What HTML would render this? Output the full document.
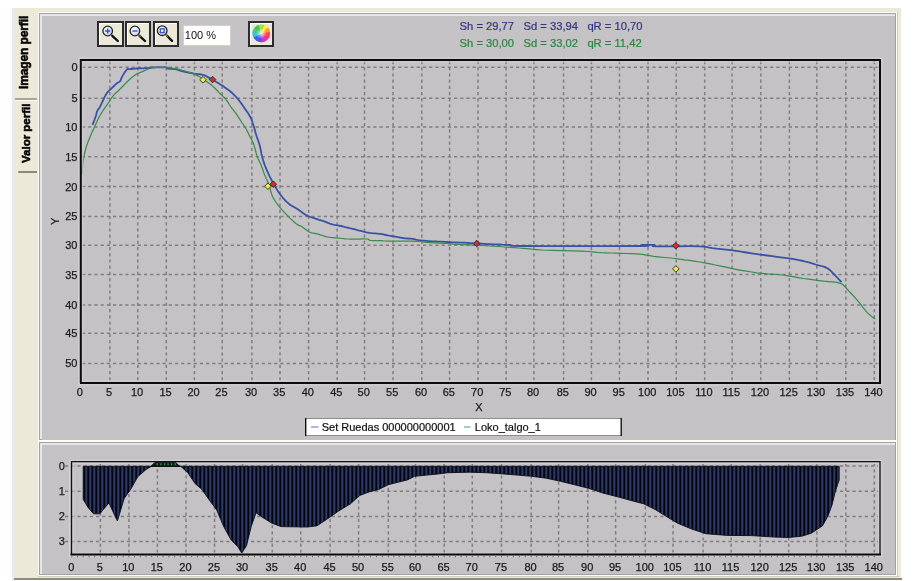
<!DOCTYPE html>
<html><head><meta charset="utf-8">
<style>
html,body{margin:0;padding:0;background:#fff;width:920px;height:581px;overflow:hidden;}
*{box-sizing:border-box;}
body{position:relative;font-family:"Liberation Sans", sans-serif;}
.a{position:absolute;will-change:transform;}
</style></head><body>
<div class="a" style="left:11.5px;top:8px;width:2px;height:573px;background:#e4eaf2"></div>
<div class="a" style="left:13.5px;top:8px;width:887px;height:572px;background:#ece9d8;"></div>
<div class="a" style="left:13.5px;top:578px;width:887.5px;height:1.7px;background:#8e8c7c"></div>
<!-- tabs -->
<div class="a" style="left:15.4px;top:97.5px;width:21.5px;height:2.3px;background:#a8a696"></div>
<div class="a" style="left:15.4px;top:100px;width:21.5px;height:1px;background:#fbfaf2"></div>
<div class="a" style="left:17.9px;top:170.6px;width:18.6px;height:2.4px;background:#8a887a;border-radius:1px 0 0 1px"></div>
<div class="a" style="left:18.3px;top:88.6px;width:0;height:0;">
  <div style="position:absolute;left:0;top:0;transform-origin:0 0;transform:rotate(-90deg);white-space:nowrap;font-weight:bold;font-size:12px;letter-spacing:-0.12px;line-height:13px;color:#000;-webkit-text-stroke:0.5px #000;">Imagen perfil</div>
</div>
<div class="a" style="left:20px;top:163px;width:0;height:0;">
  <div style="position:absolute;left:0;top:0;transform-origin:0 0;transform:rotate(-90deg);white-space:nowrap;font-weight:bold;font-size:11.5px;line-height:13px;color:#000;-webkit-text-stroke:0.5px #000;">Valor perfil</div>
</div>
<!-- main frame -->
<div class="a" style="left:37.5px;top:11.5px;width:860px;height:430.5px;background:#fdfdf8"></div>
<div class="a" style="left:39px;top:13px;width:856.5px;height:427px;border:1px solid #a2a2a2;background:#e6e6e6"></div>
<div class="a" style="left:41.5px;top:15.5px;width:853px;height:423.5px;background:#c4c2c5"></div>
<!-- bottom frame -->
<div class="a" style="left:37.5px;top:440.5px;width:860px;height:135.5px;background:#fdfdf8"></div>
<div class="a" style="left:39px;top:442px;width:856.5px;height:132.5px;border:1px solid #a2a2a2;background:#e6e6e6"></div>
<div class="a" style="left:41.5px;top:444.5px;width:853px;height:129px;background:#c4c2c5"></div>
<div class="a" style="left:897px;top:11.5px;width:1px;height:565px;background:#cfcdc0"></div>
<div class="a" style="left:37.5px;top:576px;width:860.5px;height:1px;background:#cfcdc0"></div>
<!-- toolbar buttons -->
<div class="a" style="left:97.3px;top:21.2px;width:26.6px;height:26.4px;border:2px solid #2c2c2c;background:#ece9d8;box-shadow:inset 1px 1px 0 #fff;"></div>
<div class="a" style="left:125px;top:21.2px;width:25.6px;height:26.4px;border:2px solid #2c2c2c;background:#ece9d8;box-shadow:inset 1px 1px 0 #fff;"></div>
<div class="a" style="left:152.9px;top:21.3px;width:25.6px;height:26.2px;border:2px solid #2c2c2c;background:#ece9d8;box-shadow:inset 1px 1px 0 #fff;"></div>
<div class="a" style="left:182.6px;top:25.2px;width:47.8px;height:20.8px;border:1px solid #d4d2c8;background:#fff;font-size:11px;line-height:19px;padding-left:0.8px;color:#111;">100 %</div>
<div class="a" style="left:248px;top:21.3px;width:26.2px;height:26.2px;border:2px solid #2c2c2c;background:#ece9d8;box-shadow:inset 1px 1px 0 #fff;"></div>
<svg class="a" style="left:0;top:0" width="920" height="581" viewBox="0 0 920 581" font-family='"Liberation Sans", sans-serif'>
<defs>
<filter id="bl" x="-20%" y="-20%" width="140%" height="140%"><feGaussianBlur stdDeviation="0.55"/></filter>
<radialGradient id="lens" cx="40%" cy="35%" r="65%"><stop offset="0" stop-color="#ffffff"/><stop offset="1" stop-color="#c8d0ee"/></radialGradient>
<radialGradient id="wh" cx="50%" cy="50%" r="50%"><stop offset="0" stop-color="#fff"/><stop offset="0.15" stop-color="#fff" stop-opacity="0.6"/><stop offset="0.6" stop-color="#fff" stop-opacity="0"/></radialGradient>
</defs>
<g>
 <circle cx="107.7" cy="31" r="4.8" fill="url(#lens)" stroke="#262626" stroke-width="1.3"/>
 <line x1="112.3" y1="35.8" x2="117.8" y2="41" stroke="#111" stroke-width="2.4" stroke-linecap="round"/>
 <path d="M105.1,31 H110.3 M107.7,28.4 V33.6" stroke="#3454c4" stroke-width="1.4"/>
</g>
<g>
 <circle cx="134.9" cy="31" r="4.8" fill="url(#lens)" stroke="#262626" stroke-width="1.3"/>
 <line x1="139.5" y1="35.8" x2="145" y2="41" stroke="#111" stroke-width="2.4" stroke-linecap="round"/>
 <line x1="138.9" y1="35.3" x2="140.6" y2="37" stroke="#c8d040" stroke-width="0.9"/>
 <path d="M132.3,31 H137.5" stroke="#3454c4" stroke-width="1.4"/>
</g>
<g>
 <circle cx="162.2" cy="30.7" r="4.8" fill="url(#lens)" stroke="#262626" stroke-width="1.3"/>
 <line x1="166.8" y1="35.5" x2="172" y2="40.8" stroke="#111" stroke-width="2.4" stroke-linecap="round"/>
 <line x1="166.2" y1="35" x2="167.9" y2="36.7" stroke="#c8d040" stroke-width="0.9"/>
 <rect x="160.3" y="28.8" width="3.8" height="3.8" fill="none" stroke="#3454c4" stroke-width="1.3"/>
</g>
<g filter="url(#bl)"><path d="M261.3,33.4 L263.50,24.78 A8.9,8.9 0 0 1 268.39,28.02 Z" fill="#f8f040"/><path d="M261.3,33.4 L267.81,27.34 A8.9,8.9 0 0 1 270.17,32.70 Z" fill="#ffa028"/><path d="M261.3,33.4 L270.06,31.82 A8.9,8.9 0 0 1 269.14,37.61 Z" fill="#ff4848"/><path d="M261.3,33.4 L269.52,36.81 A8.9,8.9 0 0 1 265.62,41.18 Z" fill="#ff2898"/><path d="M261.3,33.4 L266.38,40.71 A8.9,8.9 0 0 1 260.73,42.28 Z" fill="#c040c0"/><path d="M261.3,33.4 L261.62,42.29 A8.9,8.9 0 0 1 256.02,40.56 Z" fill="#6848d8"/><path d="M261.3,33.4 L256.76,41.05 A8.9,8.9 0 0 1 252.98,36.57 Z" fill="#4068e0"/><path d="M261.3,33.4 L253.34,37.38 A8.9,8.9 0 0 1 252.59,31.57 Z" fill="#38c0e8"/><path d="M261.3,33.4 L252.45,32.45 A8.9,8.9 0 0 1 254.96,27.15 Z" fill="#38d088"/><path d="M261.3,33.4 L254.37,27.81 A8.9,8.9 0 0 1 259.35,24.72 Z" fill="#48c048"/><path d="M261.3,33.4 L258.49,24.96 A8.9,8.9 0 0 1 264.35,25.04 Z" fill="#a8e040"/><circle cx="261.3" cy="33.4" r="8.9" fill="url(#wh)"/></g>
<line x1="109.9" y1="61" x2="109.9" y2="382" stroke="#807e82" stroke-width="1.5" stroke-dasharray="3.2,3"/>
<line x1="137.8" y1="61" x2="137.8" y2="382" stroke="#807e82" stroke-width="1.5" stroke-dasharray="3.2,3"/>
<line x1="166.3" y1="61" x2="166.3" y2="382" stroke="#807e82" stroke-width="1.5" stroke-dasharray="3.2,3"/>
<line x1="194.4" y1="61" x2="194.4" y2="382" stroke="#807e82" stroke-width="1.5" stroke-dasharray="3.2,3"/>
<line x1="222.2" y1="61" x2="222.2" y2="382" stroke="#807e82" stroke-width="1.5" stroke-dasharray="3.2,3"/>
<line x1="251.9" y1="61" x2="251.9" y2="382" stroke="#807e82" stroke-width="1.5" stroke-dasharray="3.2,3"/>
<line x1="280.0" y1="61" x2="280.0" y2="382" stroke="#807e82" stroke-width="1.5" stroke-dasharray="3.2,3"/>
<line x1="308.6" y1="61" x2="308.6" y2="382" stroke="#807e82" stroke-width="1.5" stroke-dasharray="3.2,3"/>
<line x1="337.1" y1="61" x2="337.1" y2="382" stroke="#807e82" stroke-width="1.5" stroke-dasharray="3.2,3"/>
<line x1="364.5" y1="61" x2="364.5" y2="382" stroke="#807e82" stroke-width="1.5" stroke-dasharray="3.2,3"/>
<line x1="393.0" y1="61" x2="393.0" y2="382" stroke="#807e82" stroke-width="1.5" stroke-dasharray="3.2,3"/>
<line x1="421.8" y1="61" x2="421.8" y2="382" stroke="#807e82" stroke-width="1.5" stroke-dasharray="3.2,3"/>
<line x1="449.6" y1="61" x2="449.6" y2="382" stroke="#807e82" stroke-width="1.5" stroke-dasharray="3.2,3"/>
<line x1="478.0" y1="61" x2="478.0" y2="382" stroke="#807e82" stroke-width="1.5" stroke-dasharray="3.2,3"/>
<line x1="506.1" y1="61" x2="506.1" y2="382" stroke="#807e82" stroke-width="1.5" stroke-dasharray="3.2,3"/>
<line x1="533.9" y1="61" x2="533.9" y2="382" stroke="#807e82" stroke-width="1.5" stroke-dasharray="3.2,3"/>
<line x1="563.6" y1="61" x2="563.6" y2="382" stroke="#807e82" stroke-width="1.5" stroke-dasharray="3.2,3"/>
<line x1="591.4" y1="61" x2="591.4" y2="382" stroke="#807e82" stroke-width="1.5" stroke-dasharray="3.2,3"/>
<line x1="619.5" y1="61" x2="619.5" y2="382" stroke="#807e82" stroke-width="1.5" stroke-dasharray="3.2,3"/>
<line x1="648.0" y1="61" x2="648.0" y2="382" stroke="#807e82" stroke-width="1.5" stroke-dasharray="3.2,3"/>
<line x1="676.2" y1="61" x2="676.2" y2="382" stroke="#807e82" stroke-width="1.5" stroke-dasharray="3.2,3"/>
<line x1="704.7" y1="61" x2="704.7" y2="382" stroke="#807e82" stroke-width="1.5" stroke-dasharray="3.2,3"/>
<line x1="732.1" y1="61" x2="732.1" y2="382" stroke="#807e82" stroke-width="1.5" stroke-dasharray="3.2,3"/>
<line x1="760.8" y1="61" x2="760.8" y2="382" stroke="#807e82" stroke-width="1.5" stroke-dasharray="3.2,3"/>
<line x1="789.4" y1="61" x2="789.4" y2="382" stroke="#807e82" stroke-width="1.5" stroke-dasharray="3.2,3"/>
<line x1="816.8" y1="61" x2="816.8" y2="382" stroke="#807e82" stroke-width="1.5" stroke-dasharray="3.2,3"/>
<line x1="845.8" y1="61" x2="845.8" y2="382" stroke="#807e82" stroke-width="1.5" stroke-dasharray="3.2,3"/>
<line x1="874.3" y1="61" x2="874.3" y2="382" stroke="#807e82" stroke-width="1.5" stroke-dasharray="3.2,3"/>
<line x1="82" y1="67.3" x2="879" y2="67.3" stroke="#807e82" stroke-width="1.5" stroke-dasharray="3.2,3"/>
<line x1="82" y1="98.2" x2="879" y2="98.2" stroke="#807e82" stroke-width="1.5" stroke-dasharray="3.2,3"/>
<line x1="82" y1="126.9" x2="879" y2="126.9" stroke="#807e82" stroke-width="1.5" stroke-dasharray="3.2,3"/>
<line x1="82" y1="156.7" x2="879" y2="156.7" stroke="#807e82" stroke-width="1.5" stroke-dasharray="3.2,3"/>
<line x1="82" y1="186.5" x2="879" y2="186.5" stroke="#807e82" stroke-width="1.5" stroke-dasharray="3.2,3"/>
<line x1="82" y1="216.4" x2="879" y2="216.4" stroke="#807e82" stroke-width="1.5" stroke-dasharray="3.2,3"/>
<line x1="82" y1="245.2" x2="879" y2="245.2" stroke="#807e82" stroke-width="1.5" stroke-dasharray="3.2,3"/>
<line x1="82" y1="274.5" x2="879" y2="274.5" stroke="#807e82" stroke-width="1.5" stroke-dasharray="3.2,3"/>
<line x1="82" y1="305.1" x2="879" y2="305.1" stroke="#807e82" stroke-width="1.5" stroke-dasharray="3.2,3"/>
<line x1="82" y1="333.2" x2="879" y2="333.2" stroke="#807e82" stroke-width="1.5" stroke-dasharray="3.2,3"/>
<line x1="82" y1="363.4" x2="879" y2="363.4" stroke="#807e82" stroke-width="1.5" stroke-dasharray="3.2,3"/>
<polyline points="92.5,124.9 93.0,123.6 93.7,121.8 94.5,119.8 95.2,117.9 95.8,116.1 96.3,114.3 96.7,112.5 97.3,111.0 97.9,109.8 98.6,108.9 99.3,108.0 100.0,106.9 100.7,105.5 101.4,103.9 102.2,102.2 103.0,100.5 103.9,98.7 104.8,96.7 105.8,94.8 106.9,93.1 108.2,91.6 109.6,90.2 111.0,88.9 112.3,87.7 113.5,86.5 114.6,85.4 115.6,84.4 116.6,83.5 117.6,82.8 118.6,82.3 119.4,81.8 120.2,81.1 120.7,80.2 121.0,79.3 121.4,78.2 122.0,76.9 123.0,75.1 124.3,73.0 125.6,71.0 126.8,69.6 127.6,69.0 128.3,69.0 129.0,69.2 130.0,69.2 131.3,69.0 132.8,68.8 134.6,68.7 136.5,68.5 138.8,68.4 141.5,68.4 144.1,68.3 146.3,68.2 147.8,68.0 148.7,67.8 149.8,67.6 151.7,67.4 154.9,67.3 159.0,67.3 163.0,67.3 165.9,67.4 167.1,67.7 167.4,68.0 167.4,68.4 168.0,68.7 169.6,68.9 171.6,68.9 173.8,69.0 175.7,69.2 177.0,69.5 178.1,69.9 179.3,70.4 181.1,70.9 183.9,71.5 187.3,72.3 190.9,73.0 194.1,73.6 196.7,74.0 199.1,74.2 201.4,74.5 203.9,75.2 206.7,76.4 209.7,78.1 212.6,79.8 215.0,81.2 216.9,82.3 218.3,83.1 219.6,83.9 221.0,84.8 222.5,85.8 224.0,86.8 225.5,87.9 227.0,89.0 228.5,90.1 230.1,91.3 231.6,92.5 233.1,93.9 234.6,95.4 236.1,97.0 237.6,98.7 239.1,100.5 240.6,102.5 242.1,104.6 243.6,106.8 245.1,108.9 246.5,111.0 248.0,113.1 249.3,115.2 250.5,117.3 251.5,119.4 252.2,121.5 252.9,123.7 253.6,125.8 254.2,127.8 254.8,129.8 255.3,131.9 256.0,134.2 256.8,136.8 257.8,139.5 258.8,142.3 259.6,145.1 260.3,147.8 260.8,150.5 261.3,153.2 261.9,155.8 262.6,158.3 263.3,160.8 264.1,163.2 264.9,165.5 265.8,167.7 266.7,169.9 267.6,171.9 268.5,173.9 269.4,175.8 270.3,177.7 271.2,179.4 272.1,181.1 272.8,182.5 273.5,183.7 274.2,185.0 275.1,186.6 276.4,188.6 277.8,190.9 279.4,193.3 281.1,195.6 282.9,197.8 284.7,199.9 286.7,201.9 288.7,203.7 290.8,205.2 293.0,206.5 295.2,207.8 297.4,209.1 299.6,210.6 301.8,212.2 303.9,213.8 306.1,215.1 308.3,216.1 310.5,217.0 312.6,217.7 314.8,218.4 317.0,219.1 319.1,219.8 321.3,220.4 323.5,221.1 325.7,221.9 327.9,222.8 330.0,223.6 332.2,224.3 334.4,224.8 336.5,225.2 338.7,225.6 340.9,226.0 343.1,226.5 345.2,227.1 347.4,227.6 349.6,228.2 351.7,228.7 353.8,229.2 356.0,229.7 358.3,230.3 360.9,230.9 363.6,231.6 366.3,232.3 369.1,232.8 371.9,233.2 374.8,233.4 377.5,233.6 380.0,233.9 382.2,234.2 384.1,234.6 385.9,235.0 387.6,235.3 389.3,235.6 390.8,235.8 392.3,236.1 394.1,236.4 396.1,236.8 398.2,237.2 400.5,237.6 402.8,238.0 405.2,238.3 407.8,238.5 410.4,238.7 412.6,238.9 414.4,239.2 415.9,239.6 417.3,239.9 419.1,240.2 421.2,240.5 423.4,240.7 425.9,240.9 428.9,241.1 432.7,241.3 437.1,241.5 441.5,241.6 445.2,241.8 447.9,242.0 449.9,242.1 451.7,242.3 453.9,242.4 456.5,242.5 459.3,242.6 462.1,242.6 464.8,242.7 467.1,242.8 469.2,243.0 471.5,243.1 474.6,243.3 478.9,243.5 483.9,243.8 489.2,244.1 494.0,244.3 498.3,244.5 502.4,244.7 506.3,244.8 510.0,245.0 511.0,245.3 510.2,245.5 512.5,245.8 523.0,246.0 547.7,246.1 582.4,246.1 616.8,246.1 640.4,246.0 648.6,245.8 647.5,245.5 643.1,245.2 641.5,245.0 644.2,244.9 648.0,244.9 651.9,244.9 654.6,245.0 654.7,245.3 653.3,245.7 652.7,246.0 655.7,246.3 664.3,246.3 676.6,246.3 689.3,246.2 699.0,246.3 704.3,246.6 707.2,247.1 709.4,247.7 712.4,248.2 716.6,248.7 721.2,249.1 726.1,249.6 731.0,250.2 736.0,250.9 741.2,251.7 746.4,252.5 751.6,253.3 756.9,254.1 762.2,254.8 767.4,255.5 772.3,256.2 776.8,256.8 780.9,257.3 784.9,257.8 788.8,258.3 792.6,258.9 796.3,259.6 799.9,260.3 803.3,261.0 806.6,261.8 809.8,262.7 812.8,263.6 815.7,264.5 818.5,265.3 821.2,266.0 823.8,266.7 826.0,267.6 827.8,268.5 829.2,269.5 830.5,270.7 832.2,272.3 834.5,274.6 837.2,277.5 839.8,280.3 841.5,282.2" fill="none" stroke="#3a52a4" stroke-width="1.8" stroke-linejoin="round"/>
<polyline points="82.1,174.4 82.2,172.4 82.4,169.4 82.6,166.2 82.8,163.4 83.1,161.1 83.4,159.1 83.8,157.1 84.2,155.1 84.7,153.0 85.2,150.8 85.8,148.7 86.3,146.8 86.8,145.3 87.3,144.0 87.7,142.7 88.3,141.3 88.9,139.7 89.6,138.0 90.3,136.2 91.1,134.4 91.9,132.6 92.7,130.8 93.6,128.9 94.5,126.9 95.5,124.7 96.6,122.4 97.6,120.0 98.7,117.9 99.7,116.0 100.7,114.3 101.7,112.7 102.8,111.0 104.0,109.2 105.2,107.4 106.5,105.6 107.8,103.8 109.1,101.9 110.3,99.8 111.6,97.9 112.9,96.1 114.2,94.6 115.6,93.3 117.0,92.0 118.4,90.7 119.7,89.4 121.1,88.0 122.4,86.7 123.8,85.3 125.2,83.8 126.7,82.3 128.2,80.8 129.8,79.3 131.4,77.9 133.1,76.5 134.7,75.2 136.5,74.1 138.4,73.1 140.4,72.3 142.4,71.6 144.1,70.9 145.5,70.3 146.6,69.7 147.7,69.2 149.0,68.7 150.6,68.3 152.2,67.9 154.1,67.6 156.1,67.4 158.4,67.3 160.8,67.2 163.4,67.3 165.9,67.4 168.4,67.6 170.9,67.9 173.3,68.3 175.7,68.7 177.9,69.2 180.1,69.7 182.2,70.3 184.3,70.9 186.5,71.5 188.8,72.2 191.0,72.9 193.0,73.6 194.8,74.3 196.4,75.1 198.0,75.9 199.6,76.8 201.2,77.8 202.9,78.9 204.5,80.0 206.1,81.2 207.7,82.3 209.2,83.4 210.8,84.6 212.6,86.1 214.7,88.0 216.9,90.3 219.1,92.6 221.0,94.5 222.5,95.9 223.6,97.0 224.7,98.0 225.8,99.3 227.0,100.9 228.2,102.7 229.4,104.6 230.7,106.5 232.0,108.3 233.4,110.1 234.8,111.9 236.1,113.7 237.3,115.5 238.5,117.4 239.7,119.2 240.9,121.0 242.1,122.8 243.3,124.5 244.5,126.3 245.7,128.2 246.8,130.2 247.9,132.4 248.9,134.5 249.9,136.6 250.9,138.4 251.8,140.0 252.7,141.8 253.6,143.9 254.4,146.6 255.3,149.7 256.1,152.9 257.0,155.8 258.0,158.4 259.2,160.9 260.3,163.2 261.3,165.5 262.1,167.7 262.8,169.8 263.5,171.8 264.3,173.9 265.2,176.0 266.1,178.2 267.1,180.3 267.9,182.3 268.6,184.2 269.2,186.0 269.7,187.8 270.3,189.6 270.8,191.4 271.3,193.1 271.9,194.9 272.7,196.8 273.8,198.8 275.0,200.9 276.5,203.0 278.1,205.2 280.0,207.5 282.0,209.8 284.2,212.2 286.5,214.6 289.0,217.1 291.6,219.6 294.1,222.0 296.3,223.8 297.9,224.9 299.1,225.4 300.3,225.8 301.7,226.5 303.4,227.8 305.3,229.3 307.3,230.8 309.3,232.0 311.4,232.8 313.6,233.2 315.8,233.6 318.0,234.1 320.2,234.8 322.4,235.5 324.5,236.2 326.7,236.8 328.7,237.2 330.7,237.5 332.8,237.7 335.4,237.9 338.5,238.2 342.0,238.5 345.7,238.8 349.6,239.0 354.1,239.0 359.0,239.0 363.6,238.9 367.0,239.0 368.6,239.3 369.1,239.7 369.3,240.1 370.2,240.4 372.2,240.5 374.8,240.5 377.5,240.5 380.0,240.5 381.8,240.6 383.1,240.8 385.1,241.0 388.7,241.1 395.1,241.2 403.4,241.2 411.6,241.2 418.0,241.3 421.4,241.5 423.0,241.8 424.3,242.1 426.7,242.4 430.8,242.6 435.8,242.9 440.9,243.1 445.2,243.3 448.3,243.5 450.7,243.8 453.0,244.1 456.1,244.3 459.9,244.5 464.1,244.6 469.0,244.8 474.6,245.1 481.6,245.5 489.7,246.0 497.8,246.5 504.8,247.0 510.2,247.4 514.6,247.7 518.6,248.0 523.0,248.3 527.3,248.7 531.5,249.2 536.3,249.6 542.6,250.0 551.5,250.3 562.2,250.6 572.8,250.8 581.7,251.1 588.0,251.5 592.7,251.9 596.9,252.3 601.3,252.6 606.2,252.8 611.1,253.0 616.0,253.1 620.9,253.3 625.9,253.5 631.1,253.6 636.0,253.8 640.4,254.1 643.9,254.6 646.8,255.1 649.8,255.7 653.5,256.3 658.6,256.9 664.6,257.5 670.5,258.0 675.2,258.5 678.1,258.9 680.0,259.2 681.6,259.4 684.0,259.8 687.4,260.2 691.3,260.7 695.5,261.3 700.0,262.0 704.8,262.9 710.1,263.9 715.4,265.0 720.7,266.1 725.9,267.2 731.0,268.3 736.1,269.3 741.3,270.3 746.5,271.2 751.6,272.0 756.8,272.8 762.0,273.4 767.2,273.9 772.3,274.2 777.4,274.5 782.6,275.0 787.8,275.8 793.0,276.7 798.1,277.6 803.3,278.5 808.6,279.2 813.9,279.9 819.0,280.6 823.9,281.2 828.5,281.6 832.9,281.9 836.9,282.4 840.4,283.3 843.0,284.7 844.9,286.5 846.7,288.6 848.7,290.9 851.2,293.5 853.9,296.4 856.5,299.4 859.0,302.3 861.2,305.0 863.3,307.8 865.3,310.3 867.3,312.6 869.4,314.6 871.6,316.4 873.6,317.9 874.9,319.0" fill="none" stroke="#3a8c4c" stroke-width="1.25" stroke-linejoin="round"/>
<polygon points="203.0,76.5 206.3,79.8 203.0,83.1 199.7,79.8" fill="#f2ea3a" stroke="#2a2a2a" stroke-width="0.9" stroke-linejoin="round"/>
<polygon points="212.6,76.3 215.9,79.6 212.6,82.9 209.3,79.6" fill="#d92a2a" stroke="#2a2a2a" stroke-width="0.9" stroke-linejoin="round"/>
<polygon points="267.9,182.9 271.2,186.2 267.9,189.5 264.6,186.2" fill="#f2ea3a" stroke="#2a2a2a" stroke-width="0.9" stroke-linejoin="round"/>
<polygon points="273.3,180.9 276.6,184.2 273.3,187.5 270.0,184.2" fill="#d92a2a" stroke="#2a2a2a" stroke-width="0.9" stroke-linejoin="round"/>
<polygon points="476.7,240.2 480.0,243.5 476.7,246.8 473.4,243.5" fill="#d92a2a" stroke="#2a2a2a" stroke-width="0.9" stroke-linejoin="round"/>
<polygon points="675.8,242.4 679.1,245.7 675.8,249.0 672.5,245.7" fill="#d92a2a" stroke="#2a2a2a" stroke-width="0.9" stroke-linejoin="round"/>
<polygon points="675.9,265.6 679.2,268.9 675.9,272.2 672.6,268.9" fill="#f2ea3a" stroke="#2a2a2a" stroke-width="0.9" stroke-linejoin="round"/>
<rect x="78.8" y="58" width="803.2" height="327" fill="none" stroke="#d4d2d5" stroke-width="1"/>
<rect x="82.8" y="62" width="795.2" height="319" fill="none" stroke="#d0ced1" stroke-width="1"/>
<path d="M80.8,382.5 V60 H880 V382.5" fill="none" stroke="#0c0c0c" stroke-width="2"/>
<path d="M80,383 H881" fill="none" stroke="#0c0c0c" stroke-width="2"/>
<text x="77.5" y="71.3" text-anchor="end" font-size="11" fill="#1a1a1a" stroke="#1a1a1a" stroke-width="0.25">0</text>
<text x="77.5" y="102.2" text-anchor="end" font-size="11" fill="#1a1a1a" stroke="#1a1a1a" stroke-width="0.25">5</text>
<text x="77.5" y="130.9" text-anchor="end" font-size="11" fill="#1a1a1a" stroke="#1a1a1a" stroke-width="0.25">10</text>
<text x="77.5" y="160.7" text-anchor="end" font-size="11" fill="#1a1a1a" stroke="#1a1a1a" stroke-width="0.25">15</text>
<text x="77.5" y="190.5" text-anchor="end" font-size="11" fill="#1a1a1a" stroke="#1a1a1a" stroke-width="0.25">20</text>
<text x="77.5" y="220.4" text-anchor="end" font-size="11" fill="#1a1a1a" stroke="#1a1a1a" stroke-width="0.25">25</text>
<text x="77.5" y="249.2" text-anchor="end" font-size="11" fill="#1a1a1a" stroke="#1a1a1a" stroke-width="0.25">30</text>
<text x="77.5" y="278.5" text-anchor="end" font-size="11" fill="#1a1a1a" stroke="#1a1a1a" stroke-width="0.25">35</text>
<text x="77.5" y="309.1" text-anchor="end" font-size="11" fill="#1a1a1a" stroke="#1a1a1a" stroke-width="0.25">40</text>
<text x="77.5" y="337.2" text-anchor="end" font-size="11" fill="#1a1a1a" stroke="#1a1a1a" stroke-width="0.25">45</text>
<text x="77.5" y="367.4" text-anchor="end" font-size="11" fill="#1a1a1a" stroke="#1a1a1a" stroke-width="0.25">50</text>
<text x="79.9" y="396.1" text-anchor="middle" font-size="11" fill="#1a1a1a" stroke="#1a1a1a" stroke-width="0.25">0</text>
<text x="109.1" y="396.1" text-anchor="middle" font-size="11" fill="#1a1a1a" stroke="#1a1a1a" stroke-width="0.25">5</text>
<text x="137.0" y="396.1" text-anchor="middle" font-size="11" fill="#1a1a1a" stroke="#1a1a1a" stroke-width="0.25">10</text>
<text x="165.5" y="396.1" text-anchor="middle" font-size="11" fill="#1a1a1a" stroke="#1a1a1a" stroke-width="0.25">15</text>
<text x="193.6" y="396.1" text-anchor="middle" font-size="11" fill="#1a1a1a" stroke="#1a1a1a" stroke-width="0.25">20</text>
<text x="221.4" y="396.1" text-anchor="middle" font-size="11" fill="#1a1a1a" stroke="#1a1a1a" stroke-width="0.25">25</text>
<text x="251.1" y="396.1" text-anchor="middle" font-size="11" fill="#1a1a1a" stroke="#1a1a1a" stroke-width="0.25">30</text>
<text x="279.2" y="396.1" text-anchor="middle" font-size="11" fill="#1a1a1a" stroke="#1a1a1a" stroke-width="0.25">35</text>
<text x="307.8" y="396.1" text-anchor="middle" font-size="11" fill="#1a1a1a" stroke="#1a1a1a" stroke-width="0.25">40</text>
<text x="336.3" y="396.1" text-anchor="middle" font-size="11" fill="#1a1a1a" stroke="#1a1a1a" stroke-width="0.25">45</text>
<text x="363.7" y="396.1" text-anchor="middle" font-size="11" fill="#1a1a1a" stroke="#1a1a1a" stroke-width="0.25">50</text>
<text x="392.2" y="396.1" text-anchor="middle" font-size="11" fill="#1a1a1a" stroke="#1a1a1a" stroke-width="0.25">55</text>
<text x="421.0" y="396.1" text-anchor="middle" font-size="11" fill="#1a1a1a" stroke="#1a1a1a" stroke-width="0.25">60</text>
<text x="448.8" y="396.1" text-anchor="middle" font-size="11" fill="#1a1a1a" stroke="#1a1a1a" stroke-width="0.25">65</text>
<text x="477.2" y="396.1" text-anchor="middle" font-size="11" fill="#1a1a1a" stroke="#1a1a1a" stroke-width="0.25">70</text>
<text x="505.3" y="396.1" text-anchor="middle" font-size="11" fill="#1a1a1a" stroke="#1a1a1a" stroke-width="0.25">75</text>
<text x="533.1" y="396.1" text-anchor="middle" font-size="11" fill="#1a1a1a" stroke="#1a1a1a" stroke-width="0.25">80</text>
<text x="562.8" y="396.1" text-anchor="middle" font-size="11" fill="#1a1a1a" stroke="#1a1a1a" stroke-width="0.25">85</text>
<text x="590.6" y="396.1" text-anchor="middle" font-size="11" fill="#1a1a1a" stroke="#1a1a1a" stroke-width="0.25">90</text>
<text x="618.7" y="396.1" text-anchor="middle" font-size="11" fill="#1a1a1a" stroke="#1a1a1a" stroke-width="0.25">95</text>
<text x="647.2" y="396.1" text-anchor="middle" font-size="11" fill="#1a1a1a" stroke="#1a1a1a" stroke-width="0.25">100</text>
<text x="675.4" y="396.1" text-anchor="middle" font-size="11" fill="#1a1a1a" stroke="#1a1a1a" stroke-width="0.25">105</text>
<text x="703.9" y="396.1" text-anchor="middle" font-size="11" fill="#1a1a1a" stroke="#1a1a1a" stroke-width="0.25">110</text>
<text x="731.3" y="396.1" text-anchor="middle" font-size="11" fill="#1a1a1a" stroke="#1a1a1a" stroke-width="0.25">115</text>
<text x="760.0" y="396.1" text-anchor="middle" font-size="11" fill="#1a1a1a" stroke="#1a1a1a" stroke-width="0.25">120</text>
<text x="788.6" y="396.1" text-anchor="middle" font-size="11" fill="#1a1a1a" stroke="#1a1a1a" stroke-width="0.25">125</text>
<text x="816.0" y="396.1" text-anchor="middle" font-size="11" fill="#1a1a1a" stroke="#1a1a1a" stroke-width="0.25">130</text>
<text x="845.0" y="396.1" text-anchor="middle" font-size="11" fill="#1a1a1a" stroke="#1a1a1a" stroke-width="0.25">135</text>
<text x="873.5" y="396.1" text-anchor="middle" font-size="11" fill="#1a1a1a" stroke="#1a1a1a" stroke-width="0.25">140</text>
<text x="479" y="411.2" text-anchor="middle" font-size="11" fill="#1a1a1a" stroke="#1a1a1a" stroke-width="0.25">X</text>
<text transform="translate(59,221.3) rotate(-90)" text-anchor="middle" font-size="11" fill="#1a1a1a" stroke="#1a1a1a" stroke-width="0.25">Y</text>
<rect x="305" y="418" width="317" height="18" fill="#fff"/>
<line x1="305" y1="418.5" x2="622" y2="418.5" stroke="#8c8c8c" stroke-width="1"/>
<line x1="305" y1="435.5" x2="622" y2="435.5" stroke="#8c8c8c" stroke-width="1"/>
<line x1="305.7" y1="418" x2="305.7" y2="436" stroke="#111" stroke-width="1.4"/>
<line x1="621.2" y1="418" x2="621.2" y2="436" stroke="#111" stroke-width="1.4"/>
<line x1="311" y1="427" x2="318.5" y2="427" stroke="#8c8cd0" stroke-width="1.3"/>
<text x="321.7" y="431" font-size="11" fill="#111" stroke="#111" stroke-width="0.2">Set Ruedas 000000000001</text>
<line x1="464" y1="427" x2="470.5" y2="427" stroke="#70b880" stroke-width="1.3"/>
<text x="474.8" y="431" font-size="11" fill="#111" stroke="#111" stroke-width="0.2">Loko_talgo_1</text>
<line x1="100.4" y1="463" x2="100.4" y2="553" stroke="#807e82" stroke-width="1.5" stroke-dasharray="3.2,3"/>
<line x1="128.9" y1="463" x2="128.9" y2="553" stroke="#807e82" stroke-width="1.5" stroke-dasharray="3.2,3"/>
<line x1="157.4" y1="463" x2="157.4" y2="553" stroke="#807e82" stroke-width="1.5" stroke-dasharray="3.2,3"/>
<line x1="186.0" y1="463" x2="186.0" y2="553" stroke="#807e82" stroke-width="1.5" stroke-dasharray="3.2,3"/>
<line x1="214.5" y1="463" x2="214.5" y2="553" stroke="#807e82" stroke-width="1.5" stroke-dasharray="3.2,3"/>
<line x1="242.6" y1="463" x2="242.6" y2="553" stroke="#807e82" stroke-width="1.5" stroke-dasharray="3.2,3"/>
<line x1="272.3" y1="463" x2="272.3" y2="553" stroke="#807e82" stroke-width="1.5" stroke-dasharray="3.2,3"/>
<line x1="300.8" y1="463" x2="300.8" y2="553" stroke="#807e82" stroke-width="1.5" stroke-dasharray="3.2,3"/>
<line x1="330.1" y1="463" x2="330.1" y2="553" stroke="#807e82" stroke-width="1.5" stroke-dasharray="3.2,3"/>
<line x1="358.6" y1="463" x2="358.6" y2="553" stroke="#807e82" stroke-width="1.5" stroke-dasharray="3.2,3"/>
<line x1="388.3" y1="463" x2="388.3" y2="553" stroke="#807e82" stroke-width="1.5" stroke-dasharray="3.2,3"/>
<line x1="415.6" y1="463" x2="415.6" y2="553" stroke="#807e82" stroke-width="1.5" stroke-dasharray="3.2,3"/>
<line x1="444.2" y1="463" x2="444.2" y2="553" stroke="#807e82" stroke-width="1.5" stroke-dasharray="3.2,3"/>
<line x1="472.3" y1="463" x2="472.3" y2="553" stroke="#807e82" stroke-width="1.5" stroke-dasharray="3.2,3"/>
<line x1="501.5" y1="463" x2="501.5" y2="553" stroke="#807e82" stroke-width="1.5" stroke-dasharray="3.2,3"/>
<line x1="531.2" y1="463" x2="531.2" y2="553" stroke="#807e82" stroke-width="1.5" stroke-dasharray="3.2,3"/>
<line x1="558.6" y1="463" x2="558.6" y2="553" stroke="#807e82" stroke-width="1.5" stroke-dasharray="3.2,3"/>
<line x1="587.8" y1="463" x2="587.8" y2="553" stroke="#807e82" stroke-width="1.5" stroke-dasharray="3.2,3"/>
<line x1="615.6" y1="463" x2="615.6" y2="553" stroke="#807e82" stroke-width="1.5" stroke-dasharray="3.2,3"/>
<line x1="645.3" y1="463" x2="645.3" y2="553" stroke="#807e82" stroke-width="1.5" stroke-dasharray="3.2,3"/>
<line x1="673.0" y1="463" x2="673.0" y2="553" stroke="#807e82" stroke-width="1.5" stroke-dasharray="3.2,3"/>
<line x1="703.1" y1="463" x2="703.1" y2="553" stroke="#807e82" stroke-width="1.5" stroke-dasharray="3.2,3"/>
<line x1="731.2" y1="463" x2="731.2" y2="553" stroke="#807e82" stroke-width="1.5" stroke-dasharray="3.2,3"/>
<line x1="760.2" y1="463" x2="760.2" y2="553" stroke="#807e82" stroke-width="1.5" stroke-dasharray="3.2,3"/>
<line x1="788.7" y1="463" x2="788.7" y2="553" stroke="#807e82" stroke-width="1.5" stroke-dasharray="3.2,3"/>
<line x1="816.8" y1="463" x2="816.8" y2="553" stroke="#807e82" stroke-width="1.5" stroke-dasharray="3.2,3"/>
<line x1="845.8" y1="463" x2="845.8" y2="553" stroke="#807e82" stroke-width="1.5" stroke-dasharray="3.2,3"/>
<line x1="874.3" y1="463" x2="874.3" y2="553" stroke="#807e82" stroke-width="1.5" stroke-dasharray="3.2,3"/>
<line x1="65" y1="466.0" x2="879" y2="466.0" stroke="#807e82" stroke-width="1.5" stroke-dasharray="3.2,3"/>
<line x1="65" y1="491.2" x2="879" y2="491.2" stroke="#807e82" stroke-width="1.5" stroke-dasharray="3.2,3"/>
<line x1="65" y1="516.4" x2="879" y2="516.4" stroke="#807e82" stroke-width="1.5" stroke-dasharray="3.2,3"/>
<line x1="65" y1="541.4" x2="879" y2="541.4" stroke="#807e82" stroke-width="1.5" stroke-dasharray="3.2,3"/>
<rect x="73.2" y="463.5" width="805.3" height="89.5" fill="none" stroke="#d0ced1" stroke-width="1"/>
<defs><pattern id="st" x="0.3" y="0" width="4.0" height="10" patternUnits="userSpaceOnUse"><rect width="4.0" height="10" fill="#04050f"/><rect x="1.4" width="1.15" height="10" fill="#4660a6"/></pattern></defs>
<polygon points="83.2,466.3 83.2,499.3 88.0,507.4 93.5,513.8 99.8,513.8 108.9,502.9 117.4,521.0 124.2,498.4 130.6,489.4 137.8,476.7 146.0,469.5 151.4,466.3 180.7,466.3 187.8,472.7 195.0,483.5 202.0,489.5 209.4,500.2 216.6,509.8 223.7,526.6 231.0,539.7 238.0,546.9 241.7,553.0 246.5,545.7 251.2,526.6 256.0,512.7 262.0,517.0 271.6,523.0 281.0,526.6 307.5,527.0 317.0,525.8 326.6,519.4 338.6,511.0 350.5,503.8 359.6,495.5 369.0,491.9 378.7,489.5 388.3,484.7 397.8,482.3 407.4,479.9 414.6,476.3 426.6,475.1 438.5,473.9 448.0,472.7 469.6,472.2 486.4,472.7 503.0,473.9 517.5,475.1 531.8,476.3 546.2,478.2 560.5,481.3 574.4,484.7 588.7,488.3 603.0,493.1 617.4,496.7 631.8,500.7 643.7,503.8 655.7,509.8 665.3,515.8 677.2,523.0 691.6,529.0 705.9,533.7 727.5,535.4 751.4,535.6 775.2,537.1 788.4,537.5 801.7,536.2 811.1,533.3 816.8,529.6 822.5,525.8 828.2,515.4 832.0,504.9 834.8,493.6 837.7,484.1 839.2,480.3 839.2,466.3" fill="url(#st)" stroke="#080c1c" stroke-width="0.9" stroke-linejoin="round"/>
<polygon points="150.8,466.3 155.2,462.2 175.5,462.2 179.6,466.3" fill="#0a1c12" stroke="#06100a" stroke-width="0.8"/>
<rect x="156.6" y="463.2" width="1.3" height="2.2" fill="#2a8a48"/>
<rect x="160.2" y="463.2" width="1.3" height="2.2" fill="#2a8a48"/>
<rect x="163.8" y="463.2" width="1.3" height="2.2" fill="#2a8a48"/>
<rect x="167.4" y="463.2" width="1.3" height="2.2" fill="#2a8a48"/>
<rect x="171.0" y="463.2" width="1.3" height="2.2" fill="#2a8a48"/>
<rect x="174.6" y="463.2" width="1.3" height="2.2" fill="#2a8a48"/>
<rect x="69.5" y="460.3" width="812.5" height="96" fill="none" stroke="#d4d2d5" stroke-width="1"/>
<path d="M71.5,554.5 V461.6 H880 V554.5" fill="none" stroke="#111" stroke-width="1.3"/>
<path d="M70.5,554.5 H881" fill="none" stroke="#0c0c0c" stroke-width="2"/>
<path d="M71.8,555.5 v1.8 M77.5,555.5 v1.8 M83.2,555.5 v1.8 M89.0,555.5 v1.8 M94.7,555.5 v1.8 M100.4,555.5 v1.8 M106.1,555.5 v1.8 M111.8,555.5 v1.8 M117.5,555.5 v1.8 M123.2,555.5 v1.8 M128.9,555.5 v1.8 M134.6,555.5 v1.8 M140.3,555.5 v1.8 M146.0,555.5 v1.8 M151.7,555.5 v1.8 M157.4,555.5 v1.8 M163.1,555.5 v1.8 M168.8,555.5 v1.8 M174.6,555.5 v1.8 M180.3,555.5 v1.8 M186.0,555.5 v1.8 M191.7,555.5 v1.8 M197.4,555.5 v1.8 M203.1,555.5 v1.8 M208.8,555.5 v1.8 M214.5,555.5 v1.8 M220.1,555.5 v1.8 M225.7,555.5 v1.8 M231.4,555.5 v1.8 M237.0,555.5 v1.8 M242.6,555.5 v1.8 M248.5,555.5 v1.8 M254.5,555.5 v1.8 M260.4,555.5 v1.8 M266.4,555.5 v1.8 M272.3,555.5 v1.8 M278.0,555.5 v1.8 M283.7,555.5 v1.8 M289.4,555.5 v1.8 M295.1,555.5 v1.8 M300.8,555.5 v1.8 M306.7,555.5 v1.8 M312.5,555.5 v1.8 M318.4,555.5 v1.8 M324.2,555.5 v1.8 M330.1,555.5 v1.8 M335.8,555.5 v1.8 M341.5,555.5 v1.8 M347.2,555.5 v1.8 M352.9,555.5 v1.8 M358.6,555.5 v1.8 M364.5,555.5 v1.8 M370.5,555.5 v1.8 M376.4,555.5 v1.8 M382.4,555.5 v1.8 M388.3,555.5 v1.8 M393.8,555.5 v1.8 M399.2,555.5 v1.8 M404.7,555.5 v1.8 M410.1,555.5 v1.8 M415.6,555.5 v1.8 M421.3,555.5 v1.8 M427.0,555.5 v1.8 M432.8,555.5 v1.8 M438.5,555.5 v1.8 M444.2,555.5 v1.8 M449.8,555.5 v1.8 M455.4,555.5 v1.8 M461.1,555.5 v1.8 M466.7,555.5 v1.8 M472.3,555.5 v1.8 M478.1,555.5 v1.8 M484.0,555.5 v1.8 M489.8,555.5 v1.8 M495.7,555.5 v1.8 M501.5,555.5 v1.8 M507.4,555.5 v1.8 M513.4,555.5 v1.8 M519.3,555.5 v1.8 M525.3,555.5 v1.8 M531.2,555.5 v1.8 M536.7,555.5 v1.8 M542.2,555.5 v1.8 M547.6,555.5 v1.8 M553.1,555.5 v1.8 M558.6,555.5 v1.8 M564.4,555.5 v1.8 M570.3,555.5 v1.8 M576.1,555.5 v1.8 M582.0,555.5 v1.8 M587.8,555.5 v1.8 M593.4,555.5 v1.8 M598.9,555.5 v1.8 M604.5,555.5 v1.8 M610.0,555.5 v1.8 M615.6,555.5 v1.8 M621.5,555.5 v1.8 M627.5,555.5 v1.8 M633.4,555.5 v1.8 M639.4,555.5 v1.8 M645.3,555.5 v1.8 M650.8,555.5 v1.8 M656.4,555.5 v1.8 M661.9,555.5 v1.8 M667.5,555.5 v1.8 M673.0,555.5 v1.8 M679.0,555.5 v1.8 M685.0,555.5 v1.8 M691.1,555.5 v1.8 M697.1,555.5 v1.8 M703.1,555.5 v1.8 M708.7,555.5 v1.8 M714.3,555.5 v1.8 M720.0,555.5 v1.8 M725.6,555.5 v1.8 M731.2,555.5 v1.8 M737.0,555.5 v1.8 M742.8,555.5 v1.8 M748.6,555.5 v1.8 M754.4,555.5 v1.8 M760.2,555.5 v1.8 M765.9,555.5 v1.8 M771.6,555.5 v1.8 M777.3,555.5 v1.8 M783.0,555.5 v1.8 M788.7,555.5 v1.8 M794.3,555.5 v1.8 M799.9,555.5 v1.8 M805.6,555.5 v1.8 M811.2,555.5 v1.8 M816.8,555.5 v1.8 M822.6,555.5 v1.8 M828.4,555.5 v1.8 M834.2,555.5 v1.8 M840.0,555.5 v1.8 M845.8,555.5 v1.8 M851.5,555.5 v1.8 M857.2,555.5 v1.8 M862.9,555.5 v1.8 M868.6,555.5 v1.8 M874.3,555.5 v1.8" stroke="#555" stroke-width="0.8"/>
<text x="64.8" y="470.0" text-anchor="end" font-size="11" fill="#1a1a1a" stroke="#1a1a1a" stroke-width="0.25">0</text>
<text x="64.8" y="495.2" text-anchor="end" font-size="11" fill="#1a1a1a" stroke="#1a1a1a" stroke-width="0.25">1</text>
<text x="64.8" y="520.4" text-anchor="end" font-size="11" fill="#1a1a1a" stroke="#1a1a1a" stroke-width="0.25">2</text>
<text x="64.8" y="545.4" text-anchor="end" font-size="11" fill="#1a1a1a" stroke="#1a1a1a" stroke-width="0.25">3</text>
<text x="71.2" y="571.4" text-anchor="middle" font-size="11" fill="#1a1a1a" stroke="#1a1a1a" stroke-width="0.25">0</text>
<text x="99.8" y="571.4" text-anchor="middle" font-size="11" fill="#1a1a1a" stroke="#1a1a1a" stroke-width="0.25">5</text>
<text x="128.3" y="571.4" text-anchor="middle" font-size="11" fill="#1a1a1a" stroke="#1a1a1a" stroke-width="0.25">10</text>
<text x="156.8" y="571.4" text-anchor="middle" font-size="11" fill="#1a1a1a" stroke="#1a1a1a" stroke-width="0.25">15</text>
<text x="185.4" y="571.4" text-anchor="middle" font-size="11" fill="#1a1a1a" stroke="#1a1a1a" stroke-width="0.25">20</text>
<text x="213.9" y="571.4" text-anchor="middle" font-size="11" fill="#1a1a1a" stroke="#1a1a1a" stroke-width="0.25">25</text>
<text x="242.0" y="571.4" text-anchor="middle" font-size="11" fill="#1a1a1a" stroke="#1a1a1a" stroke-width="0.25">30</text>
<text x="271.7" y="571.4" text-anchor="middle" font-size="11" fill="#1a1a1a" stroke="#1a1a1a" stroke-width="0.25">35</text>
<text x="300.2" y="571.4" text-anchor="middle" font-size="11" fill="#1a1a1a" stroke="#1a1a1a" stroke-width="0.25">40</text>
<text x="329.5" y="571.4" text-anchor="middle" font-size="11" fill="#1a1a1a" stroke="#1a1a1a" stroke-width="0.25">45</text>
<text x="358.0" y="571.4" text-anchor="middle" font-size="11" fill="#1a1a1a" stroke="#1a1a1a" stroke-width="0.25">50</text>
<text x="387.7" y="571.4" text-anchor="middle" font-size="11" fill="#1a1a1a" stroke="#1a1a1a" stroke-width="0.25">55</text>
<text x="415.0" y="571.4" text-anchor="middle" font-size="11" fill="#1a1a1a" stroke="#1a1a1a" stroke-width="0.25">60</text>
<text x="443.6" y="571.4" text-anchor="middle" font-size="11" fill="#1a1a1a" stroke="#1a1a1a" stroke-width="0.25">65</text>
<text x="471.7" y="571.4" text-anchor="middle" font-size="11" fill="#1a1a1a" stroke="#1a1a1a" stroke-width="0.25">70</text>
<text x="500.9" y="571.4" text-anchor="middle" font-size="11" fill="#1a1a1a" stroke="#1a1a1a" stroke-width="0.25">75</text>
<text x="530.6" y="571.4" text-anchor="middle" font-size="11" fill="#1a1a1a" stroke="#1a1a1a" stroke-width="0.25">80</text>
<text x="558.0" y="571.4" text-anchor="middle" font-size="11" fill="#1a1a1a" stroke="#1a1a1a" stroke-width="0.25">85</text>
<text x="587.2" y="571.4" text-anchor="middle" font-size="11" fill="#1a1a1a" stroke="#1a1a1a" stroke-width="0.25">90</text>
<text x="615.0" y="571.4" text-anchor="middle" font-size="11" fill="#1a1a1a" stroke="#1a1a1a" stroke-width="0.25">95</text>
<text x="644.7" y="571.4" text-anchor="middle" font-size="11" fill="#1a1a1a" stroke="#1a1a1a" stroke-width="0.25">100</text>
<text x="672.4" y="571.4" text-anchor="middle" font-size="11" fill="#1a1a1a" stroke="#1a1a1a" stroke-width="0.25">105</text>
<text x="702.5" y="571.4" text-anchor="middle" font-size="11" fill="#1a1a1a" stroke="#1a1a1a" stroke-width="0.25">110</text>
<text x="730.6" y="571.4" text-anchor="middle" font-size="11" fill="#1a1a1a" stroke="#1a1a1a" stroke-width="0.25">115</text>
<text x="759.6" y="571.4" text-anchor="middle" font-size="11" fill="#1a1a1a" stroke="#1a1a1a" stroke-width="0.25">120</text>
<text x="788.1" y="571.4" text-anchor="middle" font-size="11" fill="#1a1a1a" stroke="#1a1a1a" stroke-width="0.25">125</text>
<text x="816.2" y="571.4" text-anchor="middle" font-size="11" fill="#1a1a1a" stroke="#1a1a1a" stroke-width="0.25">130</text>
<text x="845.2" y="571.4" text-anchor="middle" font-size="11" fill="#1a1a1a" stroke="#1a1a1a" stroke-width="0.25">135</text>
<text x="873.7" y="571.4" text-anchor="middle" font-size="11" fill="#1a1a1a" stroke="#1a1a1a" stroke-width="0.25">140</text>
<text x="459.6" y="29.6" font-size="11.2" fill="#33357e" stroke="#33357e" stroke-width="0.2">Sh = 29,77</text>
<text x="459.6" y="47.4" font-size="11.2" fill="#2a843e" stroke="#2a843e" stroke-width="0.2">Sh = 30,00</text>
<text x="523.5" y="29.6" font-size="11.2" fill="#33357e" stroke="#33357e" stroke-width="0.2">Sd = 33,94</text>
<text x="523.5" y="47.4" font-size="11.2" fill="#2a843e" stroke="#2a843e" stroke-width="0.2">Sd = 33,02</text>
<text x="587.4" y="29.6" font-size="11.2" fill="#33357e" stroke="#33357e" stroke-width="0.2">qR = 10,70</text>
<text x="587.4" y="47.4" font-size="11.2" fill="#2a843e" stroke="#2a843e" stroke-width="0.2">qR = 11,42</text>
</svg>
</body></html>
